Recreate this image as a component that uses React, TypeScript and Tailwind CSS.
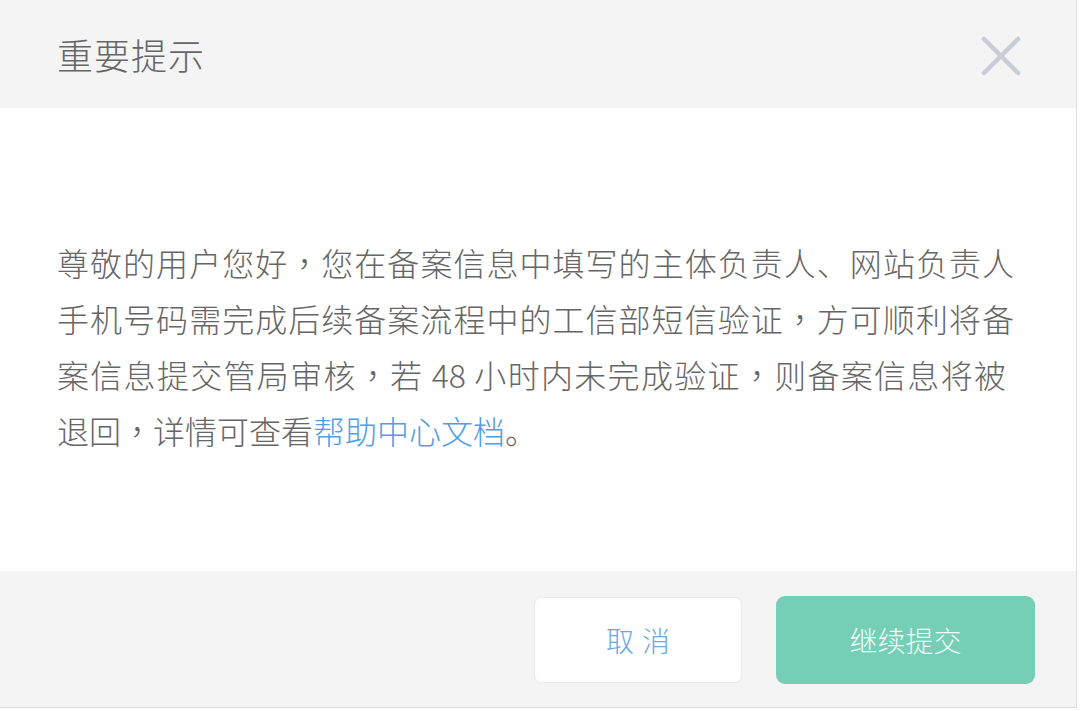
import React from "react";

const C = () => (
  <span lang="zh-TW" className="[font-family:'Noto_Sans_CJK_TC',sans-serif]">，</span>
);

export default function App() {
  return (
    <div lang="zh-CN" className="w-[1080px] h-[711px] bg-white overflow-hidden [font-family:'Noto_Sans_CJK_SC','Noto_Sans_CJK_TC',sans-serif]">
      <div className="w-[1077px] h-[708px] flex flex-col border-r border-b border-[#dcdcdc] bg-white">
        <div className="h-[108px] bg-[#f4f4f4] flex items-center justify-between pl-[57px] pr-[55px]">
          <div className="text-[36px] leading-none text-[#666666] tracking-[1px] font-light">重要提示</div>
          <svg width="40" height="40" viewBox="0 0 40 40" className="mt-[3px]">
            <path d="M3 3 L37 37 M37 3 L3 37" stroke="#c8ccd7" strokeWidth="4.5" strokeLinecap="round" />
          </svg>
        </div>
        <div className="flex-1 bg-white pl-[57px] pt-[126px]">
          <div className="w-[957px] text-[32px] leading-[56px] text-[#666666] text-justify font-light">
            <span className="block [text-align-last:justify]">尊敬的用户您好<C />您在备案信息中填写的主体负责人、网站负责人</span>
            <span className="block [text-align-last:justify]">手机号码需完成后续备案流程中的工信部短信验证<C />方可顺利将备</span>
            <span className="block [text-align-last:justify] pr-[8px]">案信息提交管局审核<C />若 48 小时内未完成验证<C />则备案信息将被</span>
            <span className="block">退回<C />详情可查看<span className="text-[#4fa0e2]">帮助中心文档</span>。</span>
          </div>
        </div>
        <div className="h-[136px] bg-[#f4f4f4] flex items-start justify-end pt-[26px] pr-[41px] gap-[34px]">
          <button className="w-[208px] h-[86px] bg-white border border-[#ececec] rounded-[8px] text-[28px] text-[#69a8e6] tracking-[8px] pl-[8px] font-light">
            取消
          </button>
          <button className="w-[259px] h-[88px] -mt-[1px] bg-[#74cfb6] rounded-[9px] text-[28px] text-[#f4fbf8] font-light">
            继续提交
          </button>
        </div>
      </div>
    </div>
  );
}
